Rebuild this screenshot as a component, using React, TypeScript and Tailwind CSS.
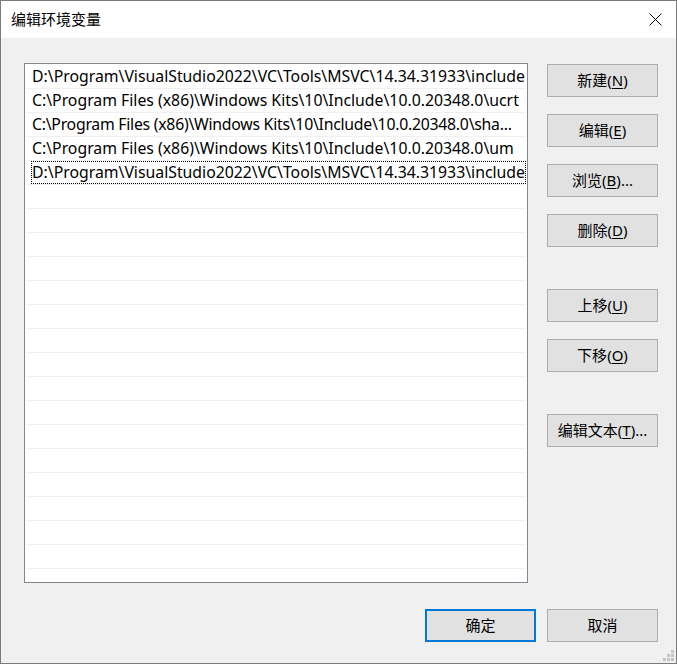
import React from 'react';

const paths = [
    'D:\\Program\\VisualStudio2022\\VC\\Tools\\MSVC\\14.34.31933\\include',
    'C:\\Program Files (x86)\\Windows Kits\\10\\Include\\10.0.20348.0\\ucrt',
    'C:\\Program Files (x86)\\Windows Kits\\10\\Include\\10.0.20348.0\\sha...',
    'C:\\Program Files (x86)\\Windows Kits\\10\\Include\\10.0.20348.0\\um',
    'D:\\Program\\VisualStudio2022\\VC\\Tools\\MSVC\\14.34.31933\\include',
];

const Btn = ({ label, mnemonic, tail = '', primary = false }: { label: string; mnemonic?: string; tail?: string; primary?: boolean }) => (
    <button
        className={`w-[111px] h-[33px] shrink-0 bg-[#e1e1e1] text-[15px] text-black flex items-center justify-center leading-none ${
            primary ? 'border-2 border-[#0078d7]' : 'border border-[#adadad]'
        }`}
    >
        {label}
        {mnemonic && (
            <>
                (<u className="underline-offset-2">{mnemonic}</u>){tail}
            </>
        )}
    </button>
);

export default function App() {
    const rows = Array.from({ length: 21 }, (_, i) => paths[i] ?? '');

    return (
        <div className="w-[677px] h-[664px] border border-[#7a7a7a] bg-[#f0f0f0] flex flex-col relative overflow-hidden font-['Noto_Sans','Noto_Sans_CJK_SC',sans-serif]">
            {/* Title bar */}
            <div className="h-[37px] bg-white flex items-center justify-between pl-[10px] pr-[14px] shrink-0">
                <span className="text-[15px] text-black font-['Noto_Sans_CJK_SC',sans-serif]">编辑环境变量</span>
                <svg width="13" height="13" viewBox="0 0 13 13" className="text-black">
                    <path d="M0.5 0.5 L12.5 12.5 M12.5 0.5 L0.5 12.5" stroke="currentColor" strokeWidth="1" />
                </svg>
            </div>

            {/* Body */}
            <div className="flex pt-[25px] pl-[23px]">
                <div className="w-[504px] h-[520px] bg-white border border-[#828790] pt-px px-px flex flex-col">
                    {rows.map((text, i) => (
                        <div key={i} className="h-[24px] shrink-0 border-b border-[#f0f0f0] flex items-stretch pl-[5px]">
                            <div
                                className={`flex-1 flex items-center text-[15.8px] text-black whitespace-nowrap overflow-hidden border ${
                                    i === 4 ? 'border-dotted border-black' : 'border-transparent'
                                } ${i === 2 ? 'tracking-[-0.25px]' : ''}`}
                            >
                                {text}
                            </div>
                        </div>
                    ))}
                </div>

                <div className="ml-[19px] mt-px flex flex-col">
                    <Btn label="新建" mnemonic="N" />
                    <div className="h-[17px]" />
                    <Btn label="编辑" mnemonic="E" />
                    <div className="h-[17px]" />
                    <Btn label="浏览" mnemonic="B" tail="..." />
                    <div className="h-[17px]" />
                    <Btn label="删除" mnemonic="D" />
                    <div className="h-[42px]" />
                    <Btn label="上移" mnemonic="U" />
                    <div className="h-[17px]" />
                    <Btn label="下移" mnemonic="O" />
                    <div className="h-[42px]" />
                    <Btn label="编辑文本" mnemonic="T" tail="..." />
                </div>
            </div>

            {/* Footer */}
            <div className="flex justify-end gap-[11px] pr-[18px] pt-[26px]">
                <Btn label="确定" primary />
                <Btn label="取消" />
            </div>

            {/* Resize grip */}
            <div className="absolute right-[2px] bottom-[2px] grid grid-cols-3 gap-px">
                <span className="w-[3px] h-[3px]" />
                <span className="w-[3px] h-[3px]" />
                <span className="w-[3px] h-[3px] bg-[#c4c4c4]" />
                <span className="w-[3px] h-[3px]" />
                <span className="w-[3px] h-[3px] bg-[#c4c4c4]" />
                <span className="w-[3px] h-[3px] bg-[#c4c4c4]" />
                <span className="w-[3px] h-[3px] bg-[#c4c4c4]" />
                <span className="w-[3px] h-[3px] bg-[#c4c4c4]" />
                <span className="w-[3px] h-[3px] bg-[#c4c4c4]" />
            </div>
        </div>
    );
}
